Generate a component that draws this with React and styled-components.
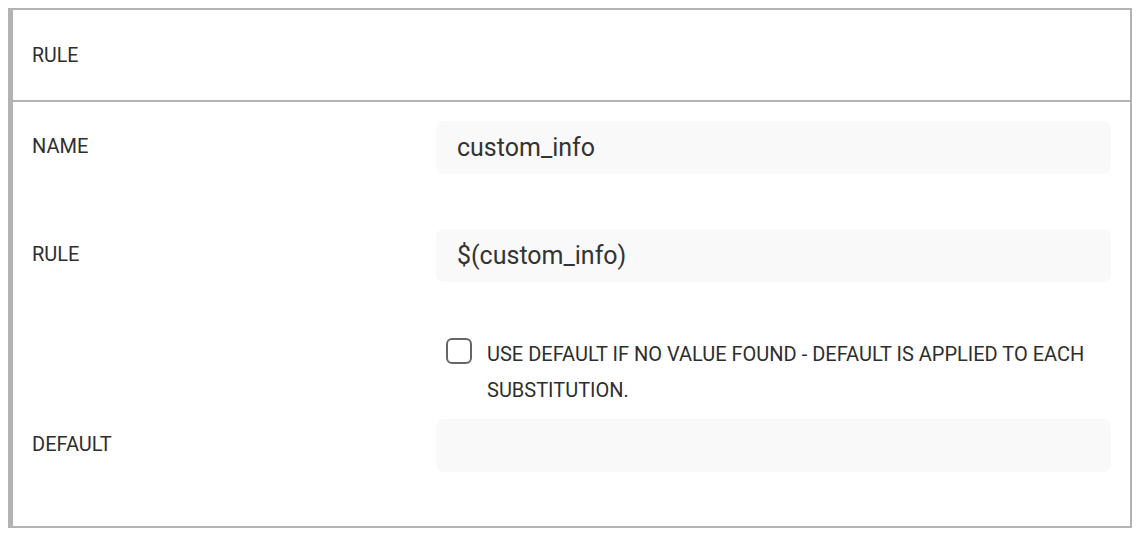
import React from "react";
import styled, { createGlobalStyle } from "styled-components";

const GlobalStyle = createGlobalStyle`
  body {
    margin: 8px;
    background: #ffffff;
    font-family: Roboto, "Liberation Sans", sans-serif;
    color: #2e2e2e;
  }
`;

const Panel = styled.div`
  width: 1124px;
  height: 520px;
  box-sizing: border-box;
  border: 2px solid #b3b3b3;
  border-left-width: 5px;
  display: flex;
  flex-direction: column;
`;

const Header = styled.div`
  height: 90px;
  display: flex;
  align-items: center;
  padding: 0 19px;
  border-bottom: 2px solid #b3b3b3;
  font-size: 19.5px;
  color: #2e2e2e;
`;

const Body = styled.div`
  padding: 19px 19px 0 19px;
  display: flex;
  flex-direction: column;
`;

const Row = styled.div`
  display: grid;
  grid-template-columns: 404px 1fr;
  align-items: center;
  margin-top: ${(p) => p.$gap || 0}px;
`;

const Label = styled.div`
  font-size: 20px;
  line-height: 24px;
  margin-top: -3px;
  color: #2e2e2e;
`;

const Field = styled.div`
  height: 53px;
  box-sizing: border-box;
  background: #f9f9f9;
  border-radius: 8px;
  padding: 0 21px;
  display: flex;
  align-items: center;
  font-size: 25px;
  color: #333;
`;

const CheckWrap = styled.label`
  display: flex;
  align-items: flex-start;
  gap: 15px;
  padding-left: 10px;
`;

const Box = styled.span`
  flex: none;
  width: 26px;
  height: 26px;
  box-sizing: border-box;
  border: 2px solid #666;
  border-radius: 6px;
  margin-top: 2px;
`;

const CheckText = styled.span`
  font-size: 20px;
  line-height: 36px;
  color: #2e2e2e;
  text-transform: uppercase;
`;

export default function App() {
  return (
    <>
      <GlobalStyle />
      <Panel>
        <Header>RULE</Header>
        <Body>
          <Row>
            <Label>NAME</Label>
            <Field>custom_info</Field>
          </Row>
          <Row $gap={55}>
            <Label>RULE</Label>
            <Field>$(custom_info)</Field>
          </Row>
          <Row $gap={54}>
            <span />
            <CheckWrap>
              <Box />
              <CheckText>
                Use default if no value found - default is applied to each substitution.
              </CheckText>
            </CheckWrap>
          </Row>
          <Row $gap={11}>
            <Label>DEFAULT</Label>
            <Field />
          </Row>
        </Body>
      </Panel>
    </>
  );
}
